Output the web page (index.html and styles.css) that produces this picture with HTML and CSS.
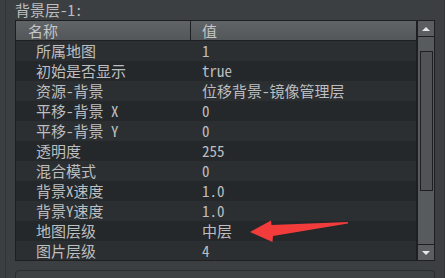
FILE: index.html
```html
<!DOCTYPE html>
<html lang="zh">
<head>
    <meta charset="UTF-8">
    <title>背景层属性</title>
    <link rel="stylesheet" href="styles.css">
</head>
<body>
    <div class="frame">
        <div class="title">背景层-1:</div>

        <div class="table-wrap">
            <div class="grid">
                <div class="head">
                    <div class="col-name">名称</div>
                    <div class="col-value">值</div>
                </div>
                <div class="row"><div class="name">所属地图</div><div class="value">1</div></div>
                <div class="row"><div class="name">初始是否显示</div><div class="value">true</div></div>
                <div class="row"><div class="name">资源-背景</div><div class="value">位移背景-镜像管理层</div></div>
                <div class="row"><div class="name">平移-背景 X</div><div class="value">0</div></div>
                <div class="row"><div class="name">平移-背景 Y</div><div class="value">0</div></div>
                <div class="row"><div class="name">透明度</div><div class="value">255</div></div>
                <div class="row"><div class="name">混合模式</div><div class="value">0</div></div>
                <div class="row"><div class="name">背景X速度</div><div class="value">1.0</div></div>
                <div class="row"><div class="name">背景Y速度</div><div class="value">1.0</div></div>
                <div class="row"><div class="name">地图层级</div><div class="value">中层</div></div>
                <div class="row"><div class="name">图片层级</div><div class="value">4</div></div>
            </div>

            <div class="scrollbar">
                <div class="sb-btn"><span class="tri-up"></span></div>
                <div class="sb-track">
                    <div class="sb-thumb"></div>
                </div>
                <div class="sb-btn"><span class="tri-down"></span></div>
            </div>
        </div>

        <div class="next-panel"></div>
    </div>

    <!-- annotation arrow pointing at the layer value -->
    <svg class="arrow" width="445" height="278" viewBox="0 0 445 278">
        <polygon points="250,232 271,220.5 271.5,225 348,222 348,223.5 273,236 272.5,242" fill="#f23b3b"/>
    </svg>
</body>
</html>
```

FILE: styles.css
```css
body {
    margin: 0;
    background: #3c3f41;
    font-family: "Noto Sans Mono CJK SC", "Noto Sans CJK SC", "DejaVu Sans Mono", monospace;
    font-size: 15px;
    color: #bcbec0;
    overflow: hidden;
    height: 278px;
}
.frame {
    margin-left: 5px;
    width: 429px;
    height: 278px;
    border-left: 1px solid #313335;
    border-right: 2px solid #323436;
    padding-left: 9px;
    overflow: hidden;
}
.title {
    height: 20px;
    line-height: 20px;
}
.table-wrap {
    display: flex;
    width: 420px;
    height: 241px;
}
.grid {
    flex: 1;
    border: 1px solid #1d1f21;
    background: #26292b;
    overflow: hidden;
}
.head {
    display: flex;
    height: 19px;
    line-height: 19px;
    background: linear-gradient(#606467, #53575a);
    border-bottom: 1px solid #1d1f21;
    color: #c4c6c8;
}
.col-name {
    width: 162px;
    padding-left: 12px;
    border-right: 1px solid #1d1f21;
}
.col-value {
    flex: 1;
    padding-left: 11px;
}
.row {
    display: flex;
    height: 20px;
    line-height: 20px;
    background: #2c2f31;
}
.row:nth-of-type(odd) {
    background: #25282a;
}
.name {
    width: 154px;
    padding-left: 20px;
}
.value {
    flex: 1;
    padding-left: 12px;
}
.scrollbar {
    width: 18px;
    display: flex;
    flex-direction: column;
}
.sb-btn {
    height: 15px;
    border: 1px solid #1d1f21;
    background: #5a5e61;
    display: flex;
    align-items: center;
    justify-content: center;
}
.sb-track {
    flex: 1;
    background: #575b5e;
    border-left: 1px solid #1d1f21;
    border-right: 1px solid #1d1f21;
    padding: 14px 1px 0 2px;
}
.sb-thumb {
    height: 138px;
    border: 1px solid #1d1f21;
    background: #505457;
}
.tri-up {
    width: 0;
    height: 0;
    border-left: 4px solid transparent;
    border-right: 4px solid transparent;
    border-bottom: 4px solid #e8e8e8;
}
.tri-down {
    width: 0;
    height: 0;
    border-left: 4px solid transparent;
    border-right: 4px solid transparent;
    border-top: 4px solid #e8e8e8;
}
.next-panel {
    margin-top: 9px;
    width: 418px;
    height: 12px;
    border: 1px solid #2a2c2e;
    border-radius: 4px;
    background: #3e4143;
}
.arrow {
    position: absolute;
    left: 0;
    top: 0;
    pointer-events: none;
}
```
